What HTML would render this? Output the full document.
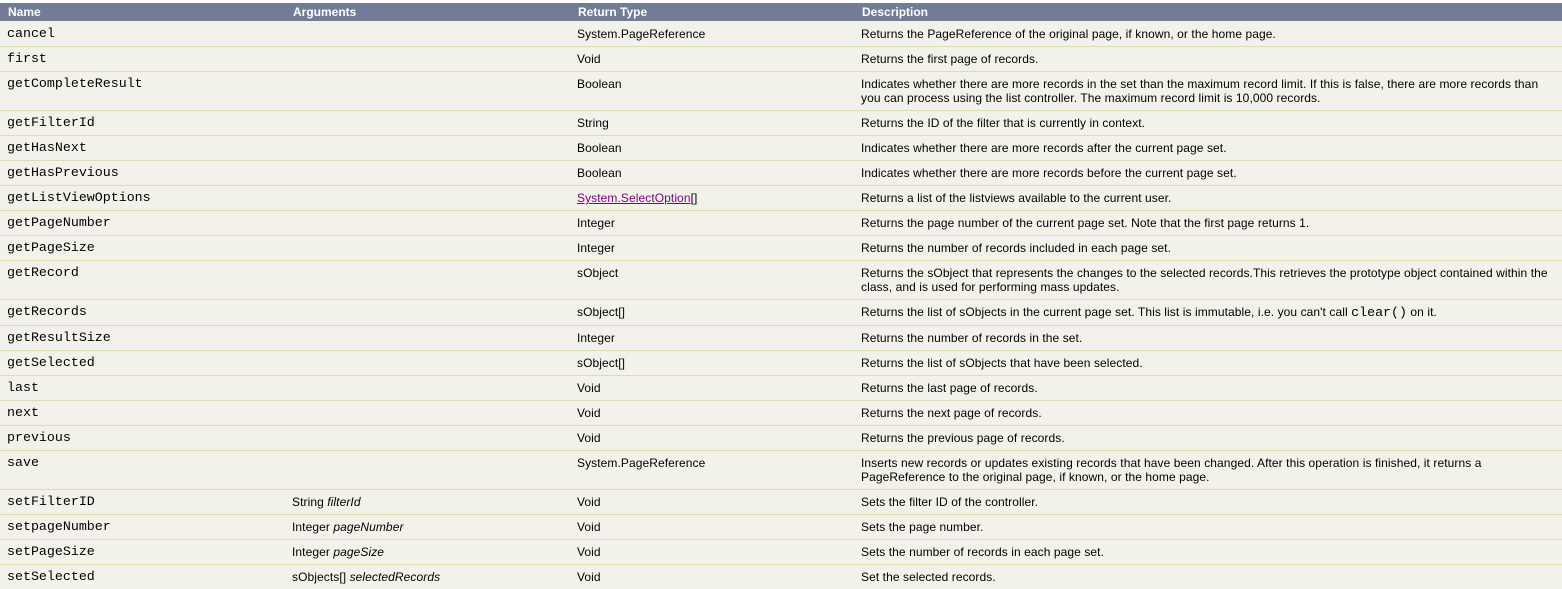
<!DOCTYPE html>
<html><head><meta charset="utf-8"><style>
body{margin:0;background:#fff;width:1562px;height:588px;overflow:hidden}
table{position:absolute;top:3px;left:0;width:1562px;border-collapse:collapse;table-layout:fixed;background:#f3f2ea;font-family:"Liberation Sans",Arial,sans-serif;font-size:12px;color:#000}
th{background:#737c96;color:#fff;font-weight:bold;text-align:left;height:18px;padding:0 0 0 8px;font-size:12px;line-height:18px}
td{padding:5px 0 5px 7px;line-height:14px;height:14px;vertical-align:top;border-top:1px solid #e0dab0;white-space:nowrap;letter-spacing:0.08px}
tr:first-child+tr td{border-top:none;padding-top:6px}
td.m{font-family:"Liberation Mono","Courier New",monospace;font-size:13.3px;letter-spacing:0}
code{font-family:"Liberation Mono",monospace;font-size:13.3px;letter-spacing:0}
a{color:#800080;text-decoration:underline}
</style></head><body>
<table>
<colgroup><col style="width:285px"><col style="width:285px"><col style="width:284px"><col></colgroup>
<tr><th>Name</th><th>Arguments</th><th>Return Type</th><th>Description</th></tr>
<tr><td class="m">cancel</td><td></td><td>System.PageReference</td><td>Returns the PageReference of the original page, if known, or the home page.</td></tr>
<tr><td class="m">first</td><td></td><td>Void</td><td>Returns the first page of records.</td></tr>
<tr><td class="m">getCompleteResult</td><td></td><td>Boolean</td><td>Indicates whether there are more records in the set than the maximum record limit. If this is false, there are more records than<br>you can process using the list controller. The maximum record limit is 10,000 records.</td></tr>
<tr><td class="m">getFilterId</td><td></td><td>String</td><td>Returns the ID of the filter that is currently in context.</td></tr>
<tr><td class="m">getHasNext</td><td></td><td>Boolean</td><td>Indicates whether there are more records after the current page set.</td></tr>
<tr><td class="m">getHasPrevious</td><td></td><td>Boolean</td><td>Indicates whether there are more records before the current page set.</td></tr>
<tr><td class="m">getListViewOptions</td><td></td><td><a>System.SelectOption</a>[]</td><td>Returns a list of the listviews available to the current user.</td></tr>
<tr><td class="m">getPageNumber</td><td></td><td>Integer</td><td>Returns the page number of the current page set. Note that the first page returns 1.</td></tr>
<tr><td class="m">getPageSize</td><td></td><td>Integer</td><td>Returns the number of records included in each page set.</td></tr>
<tr><td class="m">getRecord</td><td></td><td>sObject</td><td>Returns the sObject that represents the changes to the selected records.This retrieves the prototype object contained within the<br>class, and is used for performing mass updates.</td></tr>
<tr><td class="m">getRecords</td><td></td><td>sObject[]</td><td>Returns the list of sObjects in the current page set. This list is immutable, i.e. you can't call <code>clear()</code> on it.</td></tr>
<tr><td class="m">getResultSize</td><td></td><td>Integer</td><td>Returns the number of records in the set.</td></tr>
<tr><td class="m">getSelected</td><td></td><td>sObject[]</td><td>Returns the list of sObjects that have been selected.</td></tr>
<tr><td class="m">last</td><td></td><td>Void</td><td>Returns the last page of records.</td></tr>
<tr><td class="m">next</td><td></td><td>Void</td><td>Returns the next page of records.</td></tr>
<tr><td class="m">previous</td><td></td><td>Void</td><td>Returns the previous page of records.</td></tr>
<tr><td class="m">save</td><td></td><td>System.PageReference</td><td>Inserts new records or updates existing records that have been changed. After this operation is finished, it returns a<br>PageReference to the original page, if known, or the home page.</td></tr>
<tr><td class="m">setFilterID</td><td>String <i>filterId</i></td><td>Void</td><td>Sets the filter ID of the controller.</td></tr>
<tr><td class="m">setpageNumber</td><td>Integer <i>pageNumber</i></td><td>Void</td><td>Sets the page number.</td></tr>
<tr><td class="m">setPageSize</td><td>Integer <i>pageSize</i></td><td>Void</td><td>Sets the number of records in each page set.</td></tr>
<tr><td class="m">setSelected</td><td>sObjects[] <i>selectedRecords</i></td><td>Void</td><td>Set the selected records.</td></tr>
</table>
</body></html>
